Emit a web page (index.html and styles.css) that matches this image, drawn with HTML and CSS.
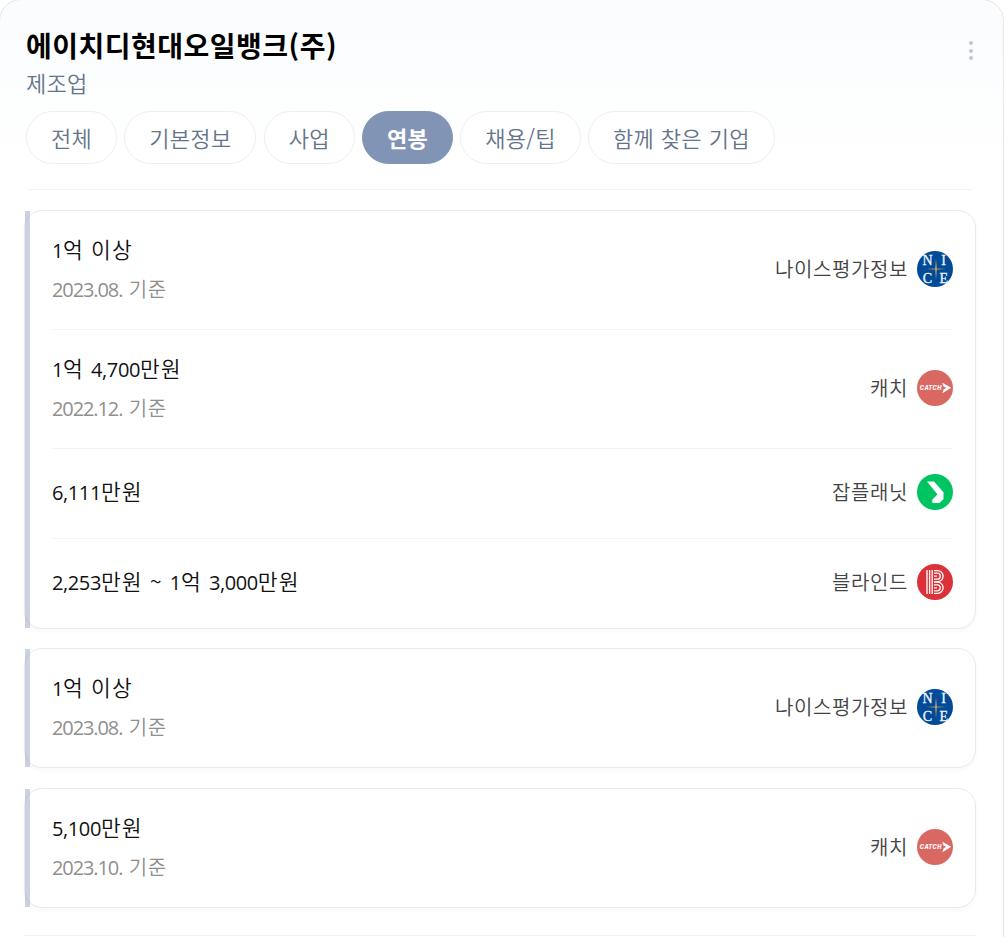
FILE: index.html
```html
<!DOCTYPE html>
<html lang="ko">
<head>
    <meta charset="UTF-8">
    <meta name="viewport" content="width=device-width, initial-scale=1.0">
    <title>에이치디현대오일뱅크(주)</title>
    <link rel="stylesheet" href="styles.css">
</head>
<body>
    <svg class="defs">
        <symbol id="logo-nice" viewBox="0 0 36 36">
            <circle cx="18" cy="18" r="18" fill="#004a98"/>
            <path d="M19 8l.8 9.500 9.200.5-9.200.5L19 29l-.8-10.500L9 18l9.200-.5z" fill="#c9a468"/>
            <g class="nice-text">
                <text x="5.600" y="14.300">N</text>
                <text x="24.300" y="14.300">I</text>
                <text x="5.800" y="31.800">C</text>
                <text x="22.600" y="31.800">E</text>
            </g>
        </symbol>
        <symbol id="logo-catch" viewBox="0 0 36 36">
            <circle cx="18" cy="18" r="18" fill="#da6862"/>
            <text class="catch-text" x="2.800" y="20.300" textLength="22" lengthAdjust="spacingAndGlyphs">CATCH</text>
            <path d="M25.300 12.800L34.200 17.800l-8.900 5.400 1.200-3.700 2.700-1.700-2.900-1.500z" fill="#fff"/>
        </symbol>
        <symbol id="logo-planet" viewBox="0 0 36 36">
            <circle cx="18" cy="18" r="18" fill="#00c362"/>
            <path d="M10 7.500h7l9.500 10.800V25l-4 4h-7.200v-3.400l5.200-5.200z" fill="#fff"/>
        </symbol>
        <symbol id="logo-blind" viewBox="0 0 36 36">
            <circle cx="18" cy="18" r="18" fill="#da3238"/>
            <g fill="none" stroke="#fff" stroke-width="1.300">
                <path d="M10 6v24M12.600 6v24M15.200 6v24"/>
                <path d="M17 6.600h3.500a5.600 5.600 0 0 1 0 11.200H17M17 9.200h3.200a3 3 0 0 1 0 6H17M17 12.200h3"/>
                <path d="M17 18.200h3.500a5.600 5.600 0 0 1 0 11.200H17M17 20.800h3.200a3 3 0 0 1 0 6H17M17 23.800h3"/>
            </g>
        </symbol>
    </svg>

    <div class="panel">
        <header class="header">
            <div class="heading">
                <h1>에이치디현대오일뱅크(주)</h1>
                <p class="category">제조업</p>
            </div>
            <button class="more" aria-label="더보기"><i></i><i></i><i></i></button>
        </header>

        <nav class="tabs">
            <a class="tab">전체</a>
            <a class="tab">기본정보</a>
            <a class="tab">사업</a>
            <a class="tab active">연봉</a>
            <a class="tab">채용/팁</a>
            <a class="tab">함께 찾은 기업</a>
        </nav>
        <hr class="top-line">

        <main class="cards">
            <section class="card">
                <div class="item">
                    <div>
                        <p class="salary"><b>1</b>억 이상</p>
                        <p class="date"><b>2023.08.</b> 기준</p>
                    </div>
                    <div class="source">나이스평가정보<svg class="logo"><use href="#logo-nice"/></svg></div>
                </div>
                <div class="item">
                    <div>
                        <p class="salary"><b>1</b>억 <b>4,700</b>만원</p>
                        <p class="date"><b>2022.12.</b> 기준</p>
                    </div>
                    <div class="source">캐치<svg class="logo"><use href="#logo-catch"/></svg></div>
                </div>
                <div class="item short">
                    <p class="salary"><b>6,111</b>만원</p>
                    <div class="source">잡플래닛<svg class="logo"><use href="#logo-planet"/></svg></div>
                </div>
                <div class="item short">
                    <p class="salary"><b>2,253</b>만원 ~ <b>1</b>억 <b>3,000</b>만원</p>
                    <div class="source">블라인드<svg class="logo"><use href="#logo-blind"/></svg></div>
                </div>
            </section>

            <section class="card">
                <div class="item">
                    <div>
                        <p class="salary"><b>1</b>억 이상</p>
                        <p class="date"><b>2023.08.</b> 기준</p>
                    </div>
                    <div class="source">나이스평가정보<svg class="logo"><use href="#logo-nice"/></svg></div>
                </div>
            </section>

            <section class="card">
                <div class="item">
                    <div>
                        <p class="salary"><b>5,100</b>만원</p>
                        <p class="date"><b>2023.10.</b> 기준</p>
                    </div>
                    <div class="source">캐치<svg class="logo"><use href="#logo-catch"/></svg></div>
                </div>
            </section>
        </main>
        <hr class="bottom-line">
    </div>
</body>
</html>
```

FILE: styles.css
```css
*{
    box-sizing: border-box;
}

body{
    margin: 0;
    height: 937px;
    overflow: hidden;
    background-color: #fff;
    font-family: "Noto Sans CJK KR", sans-serif;
    font-weight: 350;
}

h1, p{
    margin: 0;
}

.defs{
    display: none;
}

.panel{
    height: 980px;
    margin: -1px 0 0 -1px;
    padding: 26px 27px 0 26px;
    border: 1px solid #e5e6e8;
    border-radius: 22px;
    background: linear-gradient(#fafcfd, #fff 170px);
}

.header{
    display: flex;
    justify-content: space-between;
    height: 85px;
}

h1{
    font-size: 28px;
    line-height: 38px;
    letter-spacing: 0.5px;
    font-weight: 700;
    color: #000;
}

.category{
    font-size: 22px;
    line-height: 36px;
    letter-spacing: 0.2px;
    color: #64748b;
}

.more{
    display: flex;
    flex-direction: column;
    gap: 3.5px;
    height: 20px;
    margin: 15px 3px 0 0;
    padding: 0;
    border: none;
    background: none;
}

.more i{
    width: 4px;
    height: 4px;
    border-radius: 50%;
    background-color: #bfc6dc;
}

.tabs{
    display: flex;
    gap: 7.2px;
}

.tab{
    height: 53px;
    padding: 0 24px;
    border: 1px solid #eceef4;
    border-radius: 27px;
    background-color: #fff;
    font-size: 22px;
    line-height: 50px;
    letter-spacing: 0.3px;
    word-spacing: 0.3px;
    white-space: nowrap;
    color: #64748b;
}

.tab.active{
    border-color: #8294b6;
    background-color: #8294b6;
    color: #fff;
    font-weight: 700;
}

.top-line, .bottom-line{
    height: 1px;
    border: none;
    background-color: #f1f2f4;
}

.top-line{
    margin: 25px 4px 0 2px;
}

.bottom-line{
    margin: 27px 0 0 -2px;
}

.cards{
    display: flex;
    flex-direction: column;
    gap: 19.4px;
    margin: 20px 0 0 -2px;
}

.card{
    position: relative;
    padding: 0 22px 0 27px;
    border: 1px solid #e8e9ec;
    border-radius: 18px;
    background-color: #fff;
    box-shadow: 0 2px 5px rgba(0, 0, 0, 0.03);
}

/* accent bar over the left edge */
.card::before{
    content: "";
    position: absolute;
    top: 0;
    bottom: 0;
    left: 0;
    width: 5px;
    background-color: rgba(130, 148, 182, 0.42);
}

.item{
    display: flex;
    align-items: center;
    justify-content: space-between;
    height: 118px;
    padding-bottom: 2px;
}

.item + .item{
    height: 119px;
    border-top: 1px solid #f3f4f5;
}

.item + .item.short{
    height: 90px;
    padding-bottom: 4px;
}

.salary{
    font-size: 21.5px;
    line-height: 38px;
    letter-spacing: 1.1px;
    color: #111;
}

.date{
    font-size: 20px;
    line-height: 37px;
    letter-spacing: 0.7px;
    color: #8f8f8f;
}

.salary b, .date b{
    font-family: "Open Sans", sans-serif;
    font-size: 20px;
    font-weight: 400;
    letter-spacing: -1.1px;
}

.salary b{
    letter-spacing: -0.4px;
}

.source{
    display: flex;
    align-items: center;
    gap: 9px;
    font-size: 20px;
    line-height: 36px;
    letter-spacing: 0.6px;
    color: #444;
}

.logo{
    width: 36px;
    height: 36px;
}

.nice-text{
    font-family: "Liberation Serif", serif;
    font-size: 14px;
    fill: #f0f4fa;
    stroke: #f0f4fa;
    stroke-width: 0.3px;
}

.catch-text{
    font-family: "Liberation Sans", sans-serif;
    font-size: 7px;
    font-style: italic;
    font-weight: 700;
    fill: #fff;
    stroke: #fff;
    stroke-width: 0.2px;
}
```
